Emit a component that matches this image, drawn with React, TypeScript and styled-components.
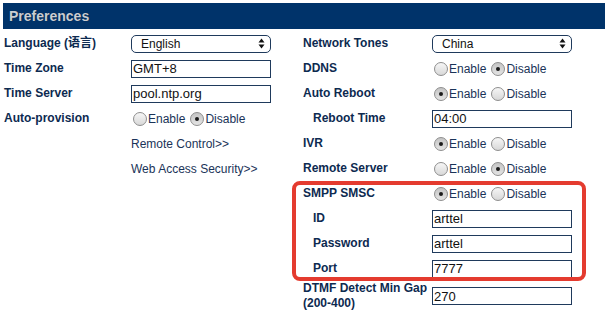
import { createGlobalStyle, styled } from "styled-components";

const GlobalStyle = createGlobalStyle`
  body {
    margin: 0;
    background: #ffffff;
    font-family: "Liberation Sans", "Noto Sans CJK SC", Arial, sans-serif;
    color: #0d2a50;
  }
`;

const Page = styled.div`
  padding: 3px 3px 0 3px;
  width: 602px;
`;

const Header = styled.div`
  height: 26px;
  background: #00336a;
  display: flex;
  align-items: center;
  padding-left: 6px;
  font-size: 14px;
  font-weight: bold;
  color: #c9cdd3;
  text-shadow: 0 0 1px rgba(0, 0, 0, 0.5);
`;

const Columns = styled.div`
  display: flex;
  margin-top: 2px;
`;

const Panel = styled.div<{ $width: number; $labelWidth: number }>`
  --label-w: ${(p) => p.$labelWidth}px;
  width: ${(p) => p.$width}px;
  display: flex;
  flex-direction: column;
`;

const Row = styled.div<{ $tall?: boolean }>`
  display: grid;
  grid-template-columns: var(--label-w) 1fr;
  height: ${(p) => (p.$tall ? 30 : 25)}px;
`;

const Label = styled.div<{ $indent?: boolean }>`
  display: flex;
  align-items: center;
  padding-left: ${(p) => (p.$indent ? 11 : 1)}px;
  font-size: 12px;
  font-weight: bold;
  line-height: 15px;
  color: #0d2a50;
`;

const Cell = styled.div`
  display: flex;
  align-items: center;
`;

const LinkText = styled.span`
  font-size: 12px;
  color: #1a3358;
`;

const TextInput = styled.input`
  box-sizing: border-box;
  width: 140px;
  height: 18px;
  border: 1px solid #1f3a5c;
  padding: 0 1px;
  font-family: "Liberation Sans", Arial, sans-serif;
  font-size: 13px;
  color: #111;
  outline: none;
  background: #fff;
`;

const SelectBox = styled.div`
  box-sizing: border-box;
  width: 140px;
  height: 18px;
  border: 1px solid #1f3a5c;
  border-radius: 5px;
  display: flex;
  align-items: center;
  justify-content: space-between;
  padding: 0 5px 0 9px;
  font-size: 12px;
  color: #111;
  background: #fff;
`;

const RadioGroup = styled.div`
  display: flex;
  align-items: center;
  gap: 5px;
  padding-left: 2px;
`;

const RadioOption = styled.label`
  display: flex;
  align-items: center;
  gap: 1px;
  font-size: 12px;
  color: #1a3358;
`;

const RadioDot = styled.span<{ $on: boolean }>`
  box-sizing: border-box;
  width: 14px;
  height: 14px;
  border-radius: 50%;
  border: 1px solid #8e8e8e;
  background: ${(p) =>
    p.$on
      ? "linear-gradient(#c4c4c4, #e4e4e4)"
      : "linear-gradient(#f6f6f6, #d8d8d8)"};
  display: flex;
  align-items: center;
  justify-content: center;

  &::after {
    content: "";
    width: 4px;
    height: 4px;
    border-radius: 50%;
    background: #1a1a1a;
    display: ${(p) => (p.$on ? "block" : "none")};
  }
`;

// red annotation frame drawn over the SMPP rows
const HighlightGroup = styled.div`
  position: relative;

  &::before {
    content: "";
    position: absolute;
    left: -10px;
    right: 19px;
    top: 0;
    bottom: 0;
    border: 4px solid #e43b2f;
    border-radius: 8px;
    pointer-events: none;
  }
`;

const Arrows = () => (
  <svg width="7" height="11" viewBox="0 0 7 11">
    <path d="M3.5 0.5 L6.5 4.5 L0.5 4.5 Z" fill="#111" />
    <path d="M3.5 10.5 L6.5 6.5 L0.5 6.5 Z" fill="#111" />
  </svg>
);

const Select = ({ value }: { value: string }) => (
  <SelectBox>
    <span>{value}</span>
    <Arrows />
  </SelectBox>
);

const Radios = ({ enabled }: { enabled: boolean }) => (
  <RadioGroup>
    <RadioOption>
      <RadioDot $on={enabled} />
      Enable
    </RadioOption>
    <RadioOption>
      <RadioDot $on={!enabled} />
      Disable
    </RadioOption>
  </RadioGroup>
);

const App = () => {
  return (
    <>
      <GlobalStyle />
      <Page>
        <Header>Preferences</Header>
        <Columns>
          <Panel $width={299} $labelWidth={128}>
            <Row>
              <Label>Language (语言)</Label>
              <Cell>
                <Select value="English" />
              </Cell>
            </Row>
            <Row>
              <Label>Time Zone</Label>
              <Cell>
                <TextInput defaultValue="GMT+8" />
              </Cell>
            </Row>
            <Row>
              <Label>Time Server</Label>
              <Cell>
                <TextInput defaultValue="pool.ntp.org" />
              </Cell>
            </Row>
            <Row>
              <Label>Auto-provision</Label>
              <Cell>
                <Radios enabled={false} />
              </Cell>
            </Row>
            <Row>
              <Label />
              <Cell>
                <LinkText>Remote Control&gt;&gt;</LinkText>
              </Cell>
            </Row>
            <Row>
              <Label />
              <Cell>
                <LinkText>Web Access Security&gt;&gt;</LinkText>
              </Cell>
            </Row>
          </Panel>

          <Panel $width={303} $labelWidth={130}>
            <Row>
              <Label>Network Tones</Label>
              <Cell>
                <Select value="China" />
              </Cell>
            </Row>
            <Row>
              <Label>DDNS</Label>
              <Cell>
                <Radios enabled={false} />
              </Cell>
            </Row>
            <Row>
              <Label>Auto Reboot</Label>
              <Cell>
                <Radios enabled={true} />
              </Cell>
            </Row>
            <Row>
              <Label $indent>Reboot Time</Label>
              <Cell>
                <TextInput defaultValue="04:00" />
              </Cell>
            </Row>
            <Row>
              <Label>IVR</Label>
              <Cell>
                <Radios enabled={true} />
              </Cell>
            </Row>
            <Row>
              <Label>Remote Server</Label>
              <Cell>
                <Radios enabled={false} />
              </Cell>
            </Row>
            <HighlightGroup>
              <Row>
                <Label>SMPP SMSC</Label>
                <Cell>
                  <Radios enabled={true} />
                </Cell>
              </Row>
              <Row>
                <Label $indent>ID</Label>
                <Cell>
                  <TextInput defaultValue="arttel" />
                </Cell>
              </Row>
              <Row>
                <Label $indent>Password</Label>
                <Cell>
                  <TextInput defaultValue="arttel" />
                </Cell>
              </Row>
              <Row>
                <Label $indent>Port</Label>
                <Cell>
                  <TextInput defaultValue="7777" />
                </Cell>
              </Row>
            </HighlightGroup>
            <Row $tall>
              <Label>
                DTMF Detect Min Gap
                <br />
                (200-400)
              </Label>
              <Cell>
                <TextInput defaultValue="270" />
              </Cell>
            </Row>
          </Panel>
        </Columns>
      </Page>
    </>
  );
};

export default App;
